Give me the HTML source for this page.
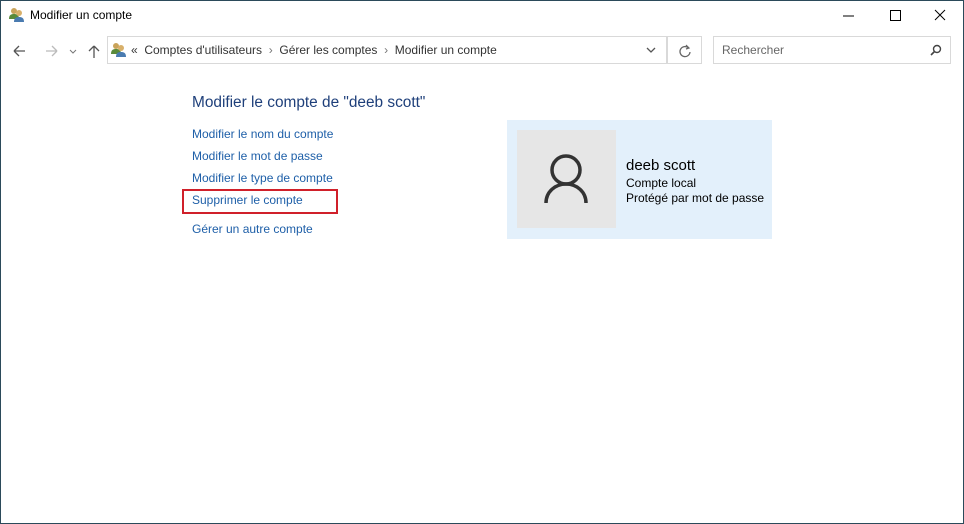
<!DOCTYPE html>
<html><head><style>
body{margin:0;width:964px;height:524px;position:relative;background:#fff;font-family:"Liberation Sans",sans-serif;overflow:hidden}
.frame{position:absolute;left:0;top:0;width:962px;height:522px;border:1px solid #2b4a5a}
.t{position:absolute;white-space:nowrap}
.lnk{position:absolute;left:192px;font-size:12px;color:#1e5fa8;white-space:nowrap}
</style></head><body>
<div class="frame"></div>
<svg class="t" style="left:8px;top:7px" width="18" height="16" viewBox="0 0 18 16"><circle cx="6" cy="4" r="3" fill="#c9a35a"/><path d="M1 12c0-4 2-5 5-5s5 1 5 5z" fill="#5a8a3a"/><circle cx="11" cy="6" r="3" fill="#d8b06a"/><path d="M6 15c0-4 2-5 5-5s5 1 5 5z" fill="#4a7bb0"/></svg>
<div class="t" style="left:30px;top:8px;font-size:12px;color:#000">Modifier un compte</div>
<svg class="t" style="left:835px;top:6px" width="120" height="20"><line x1="8" y1="10" x2="19" y2="10" stroke="#000"/><rect x="55.5" y="4.5" width="10" height="10" fill="none" stroke="#000"/><path d="M100 4l10 10M110 4l-10 10" stroke="#000"/></svg>
<svg class="t" style="left:10px;top:42px" width="90" height="18"><path d="M4 9h11M4 9l5-5M4 9l5 5" stroke="#555" fill="none" stroke-width="1.3"/><path d="M36 9h11M47 9l-5-5M47 9l-5 5" stroke="#bbb" fill="none" stroke-width="1.3"/><path d="M60 8l3 3 3-3" stroke="#777" fill="none"/><path d="M84 16V4M84 4l-5 5M84 4l5 5" stroke="#555" fill="none" stroke-width="1.3"/></svg>
<div class="t" style="left:107px;top:36px;width:560px;height:28px;border:1px solid #d9d9d9;box-sizing:border-box"></div>
<div class="t" style="left:668px;top:36px;width:34px;height:28px;border:1px solid #d9d9d9;border-left:none;box-sizing:border-box"></div>
<div class="t" style="left:667px;top:36px;width:1px;height:28px;background:#d9d9d9"></div>
<svg class="t" style="left:110px;top:42px" width="18" height="16" viewBox="0 0 18 16"><circle cx="6" cy="4" r="3" fill="#c9a35a"/><path d="M1 12c0-4 2-5 5-5s5 1 5 5z" fill="#5a8a3a"/><circle cx="11" cy="6" r="3" fill="#d8b06a"/><path d="M6 15c0-4 2-5 5-5s5 1 5 5z" fill="#4a7bb0"/></svg>
<div class="t" style="left:131px;top:43px;font-size:12px;color:#333">«&nbsp;&nbsp;Comptes d'utilisateurs &nbsp;<span style="color:#777">›</span>&nbsp; Gérer les comptes &nbsp;<span style="color:#777">›</span>&nbsp; Modifier un compte</div>
<svg class="t" style="left:645px;top:45px" width="12" height="10"><path d="M2 3l4 4 4-4" stroke="#555" fill="none" stroke-width="1.3"/></svg>
<svg class="t" style="left:677px;top:43px" width="16" height="16"><path d="M11.5 5A5 5 0 1 0 13 9" stroke="#666" fill="none" stroke-width="1.3"/><path d="M9 2l3 3-3 1" stroke="#666" fill="none" stroke-width="1.2"/></svg>
<div class="t" style="left:713px;top:36px;width:238px;height:28px;border:1px solid #d9d9d9;box-sizing:border-box"></div>
<div class="t" style="left:722px;top:43px;font-size:12px;color:#666">Rechercher</div>
<svg class="t" style="left:929px;top:43px" width="14" height="14"><circle cx="8" cy="6" r="3.5" stroke="#444" fill="none" stroke-width="1.4"/><path d="M5.5 8.5L2 12" stroke="#444" stroke-width="1.6"/></svg>
<div class="t" style="left:192px;top:94px;font-size:15.4px;color:#1e3f7a">Modifier le compte de "deeb scott"</div>
<div class="lnk" style="top:127px">Modifier le nom du compte</div>
<div class="lnk" style="top:149px">Modifier le mot de passe</div>
<div class="lnk" style="top:171px">Modifier le type de compte</div>
<div class="lnk" style="top:193px">Supprimer le compte</div>
<div class="t" style="left:182px;top:189px;width:156px;height:25px;border:2px solid #d0202a;box-sizing:border-box"></div>
<div class="lnk" style="top:222px">Gérer un autre compte</div>
<div class="t" style="left:507px;top:120px;width:265px;height:119px;background:#e3f0fb"></div>
<div class="t" style="left:517px;top:130px;width:99px;height:98px;background:#e6e6e6"></div>
<svg class="t" style="left:540px;top:150px" width="52" height="56"><circle cx="26" cy="20" r="14" stroke="#333" stroke-width="3.5" fill="none"/><path d="M6 53c0-11 9-19 20-19s20 8 20 19" stroke="#333" stroke-width="3.5" fill="none"/></svg>
<div class="t" style="left:626px;top:157px;font-size:15px;color:#000">deeb scott</div>
<div class="t" style="left:626px;top:176px;font-size:12px;color:#000">Compte local</div>
<div class="t" style="left:626px;top:191px;font-size:12px;color:#000">Protégé par mot de passe</div>
</body></html>
